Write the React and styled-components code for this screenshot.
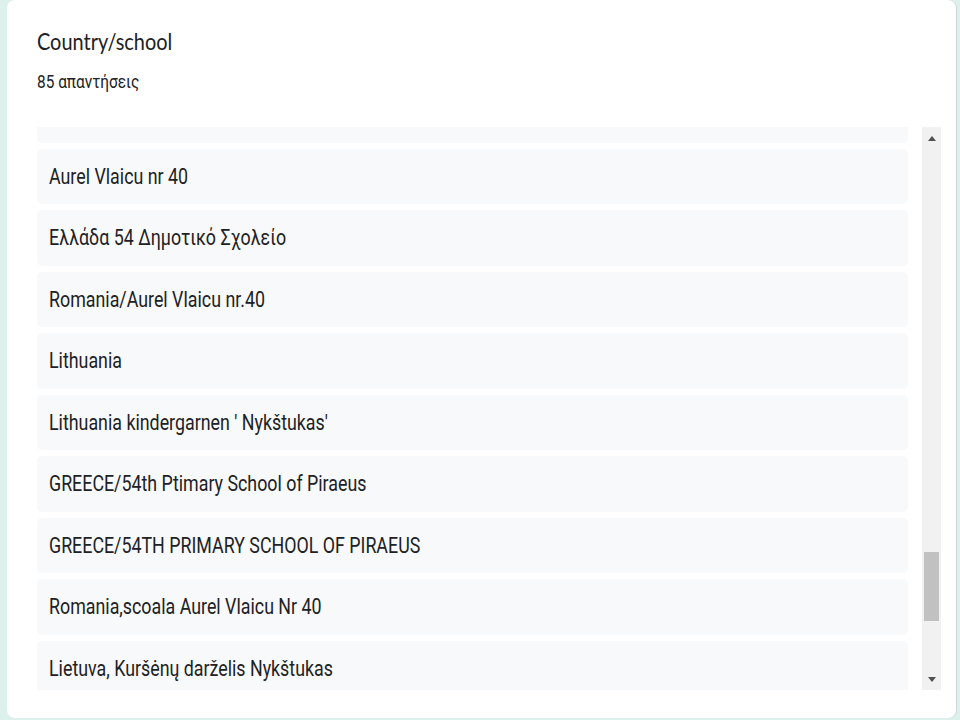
import { useLayoutEffect, useRef } from "react";
import styled, { createGlobalStyle } from "styled-components";

const answers = [
  "Lithuania",
  "Greece",
  "Romania",
  "Aurel Vlaicu nr 40",
  "Ελλάδα 54 Δημοτικό Σχολείο",
  "Romania/Aurel Vlaicu nr.40",
  "Lithuania",
  "Lithuania kindergarnen ' Nykštukas'",
  "GREECE/54th Ptimary School of Piraeus",
  "GREECE/54TH PRIMARY SCHOOL OF PIRAEUS",
  "Romania,scoala Aurel Vlaicu Nr 40",
  "Lietuva, Kuršėnų darželis Nykštukas",
  "Lithuania",
  "Greece",
];

export default function App() {
  const listRef = useRef(null);

  useLayoutEffect(() => {
    if (listRef.current) listRef.current.scrollTop = 2 * 61.5 + 40;
  }, []);

  return (
    <>
      <GlobalStyle />
      <Page>
        <Card>
          <Title>
            <Narrow sx={0.83}>Country/school</Narrow>
          </Title>
          <Count>
            <Narrow sx={0.88}>85 απαντήσεις</Narrow>
          </Count>
          <ListArea>
            <List ref={listRef}>
              {answers.map((text, i) => (
                <Answer key={i}>
                  <Narrow sx={0.81}>{text}</Narrow>
                </Answer>
              ))}
            </List>
            <ScrollBar>
              <Arrow>
                <svg width="8" height="5" viewBox="0 0 8 5">
                  <path d="M0 5 L4 0 L8 5 Z" fill="#505050" />
                </svg>
              </Arrow>
              <Track>
                <Spacer grow={403} />
                <Thumb />
                <Spacer grow={47} />
              </Track>
              <Arrow>
                <svg width="8" height="5" viewBox="0 0 8 5">
                  <path d="M0 0 L8 0 L4 5 Z" fill="#505050" />
                </svg>
              </Arrow>
            </ScrollBar>
          </ListArea>
        </Card>
      </Page>
    </>
  );
}

const GlobalStyle = createGlobalStyle`
  html, body {
    margin: 0;
    padding: 0;
    background: #ddf1ec;
  }
  body {
    font-family: Roboto, "Liberation Sans", sans-serif;
    color: #202124;
  }
`;

const Page = styled.div`
  width: 960px;
  height: 720px;
  padding-left: 7px;
  box-sizing: border-box;
  overflow: hidden;
`;

const Card = styled.div`
  width: 949px;
  height: 718px;
  box-sizing: border-box;
  background: #ffffff;
  border-radius: 8px;
  box-shadow: 1px 0 0 #cdd9d6;
  padding: 26px 15px 0 30px;
  display: flex;
  flex-direction: column;
`;

/* the shot is squeezed sideways, so text is narrowed to match */
const Narrow = styled.span`
  display: inline-block;
  white-space: nowrap;
  transform: scaleX(${(p) => p.sx});
  transform-origin: left center;
`;

const Title = styled.div`
  font-family: Lato, Roboto, sans-serif;
  font-size: 24px;
  line-height: 30px;
  color: #202124;
`;

const Count = styled.div`
  margin-top: 15px;
  font-size: 17.5px;
  line-height: 22px;
  color: #202124;
`;

const ListArea = styled.div`
  margin-top: 34px;
  height: 563px;
  display: flex;
  gap: 14px;
`;

const List = styled.div`
  flex: 1;
  overflow: hidden;
  display: flex;
  flex-direction: column;
  gap: 6px;
`;

const Answer = styled.div`
  flex: none;
  height: 55.5px;
  display: flex;
  align-items: center;
  padding: 0 12px;
  background: #f8f9fa;
  border-radius: 5px;
  font-size: 22px;
  color: #202124;
  white-space: nowrap;
`;

const ScrollBar = styled.div`
  width: 19px;
  display: flex;
  flex-direction: column;
  background: #f1f1f1;
`;

const Arrow = styled.div`
  height: 22px;
  display: flex;
  align-items: center;
  justify-content: center;
`;

const Track = styled.div`
  flex: 1;
  display: flex;
  flex-direction: column;
  padding: 0 2px;
`;

const Spacer = styled.div`
  flex: ${(p) => p.grow};
`;

const Thumb = styled.div`
  height: 69px;
  background: #c1c1c1;
`;
